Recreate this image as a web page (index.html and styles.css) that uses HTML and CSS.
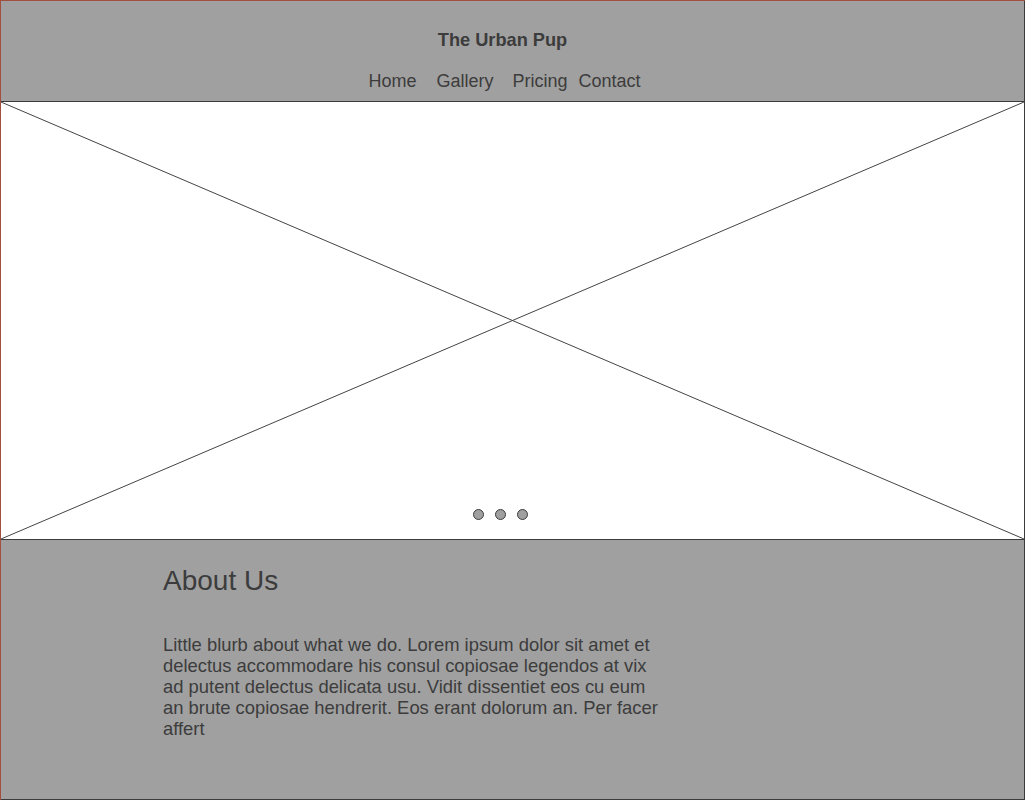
FILE: index.html
```html
<!DOCTYPE html>
<html>
<head>
<meta charset="utf-8">
<link rel="stylesheet" href="styles.css">
</head>
<body>
<div class="page">
  <header class="header">
    <div class="title">The Urban Pup</div>
    <nav class="nav">
      <span class="nav-item nav-first">Home</span>
      <span class="nav-item">Gallery</span>
      <span class="nav-item">Pricing</span>
      <span class="nav-item nav-last">Contact</span>
    </nav>
  </header>
  <section class="hero">
    <svg class="hero-x" viewBox="0 0 1023 437" preserveAspectRatio="none">
      <line x1="0" y1="0" x2="1023" y2="437" stroke="#444" stroke-width="1" vector-effect="non-scaling-stroke"/>
      <line x1="0" y1="437" x2="1023" y2="0" stroke="#444" stroke-width="1" vector-effect="non-scaling-stroke"/>
    </svg>
    <div class="dots">
      <span class="dot"></span>
      <span class="dot"></span>
      <span class="dot"></span>
    </div>
  </section>
  <section class="about">
    <h2 class="about-title">About Us</h2>
    <p class="about-text">Little blurb about what we do. Lorem ipsum dolor sit amet et delectus accommodare his consul copiosae legendos at vix ad putent delectus delicata usu. Vidit dissentiet eos cu eum an brute copiosae hendrerit. Eos erant dolorum an. Per facer affert</p>
  </section>
</div>
</body>
</html>
```

FILE: styles.css
```css
html, body {
  margin: 0;
  padding: 0;
  background: #ffffff;
}
body {
  font-family: "Liberation Sans", Arial, sans-serif;
  color: #3c3c3c;
}
.page {
  width: 1024px;
  border-top: 1px solid #a24f3f;
  border-left: 1px solid #a24f3f;
}
.header {
  height: 100px;
  background: #a0a0a0;
  border-right: 1px solid #3c3c3c;
  border-bottom: 1px solid #3c3c3c;
  display: flex;
  flex-direction: column;
  align-items: center;
}
.title {
  margin-top: 29px;
  font-size: 18.2px;
  font-weight: bold;
  line-height: 21px;
  padding-right: 20px;
}
.nav {
  margin-top: 19px;
  display: flex;
  gap: 19px;
  font-size: 18px;
  line-height: 22px;
  padding-right: 16px;
}
.nav-first {
  margin-right: 1px;
}
.nav-last {
  margin-left: -8px;
}
.hero {
  position: relative;
  height: 437px;
  background: #ffffff;
  border-right: 1px solid #3c3c3c;
  border-bottom: 1px solid #3c3c3c;
  display: flex;
  flex-direction: column;
  justify-content: flex-end;
  align-items: center;
}
.hero-x {
  position: absolute;
  left: 0;
  top: 0;
  width: 100%;
  height: 100%;
}
.dots {
  position: relative;
  display: flex;
  gap: 11px;
  margin-bottom: 19px;
  padding-right: 24px;
}
.dot {
  width: 9px;
  height: 9px;
  border-radius: 50%;
  background: #a0a0a0;
  border: 1px solid #3c3c3c;
}
.about {
  height: 260px;
  box-sizing: border-box;
  background: #a0a0a0;
  border-right: 1px solid #3c3c3c;
  border-bottom: 1px solid #3c3c3c;
  padding-left: 162px;
  overflow: hidden;
}
.about-title {
  margin: 0;
  padding-top: 25px;
  font-size: 28px;
  font-weight: normal;
  line-height: 32px;
}
.about-text {
  margin: 37px 0 0 0;
  width: 502px;
  font-size: 18.4px;
  line-height: 21px;
}
```
